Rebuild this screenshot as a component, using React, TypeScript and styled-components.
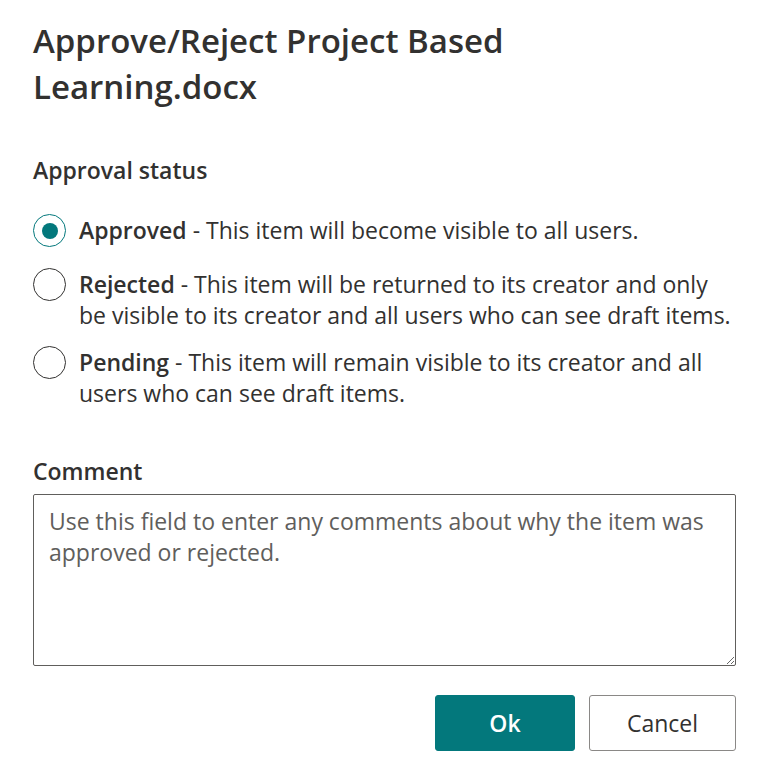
import { useState } from "react";
import styled, { createGlobalStyle } from "styled-components";

const GlobalStyle = createGlobalStyle`
  html, body {
    margin: 0;
    padding: 0;
    background: #ffffff;
  }
  body {
    font-family: "Open Sans", "Noto Sans", sans-serif;
    color: #323130;
  }
`;

const Dialog = styled.div`
  width: 761px;
  box-sizing: border-box;
  padding: 18px 25px 30px 33px;
  display: flex;
  flex-direction: column;
`;

const Title = styled.h1`
  margin: 0;
  font-size: 33px;
  line-height: 46px;
  font-weight: 600;
  color: #323130;
  max-width: 520px;
`;

const FieldLabel = styled.div<{ $top: number }>`
  margin-top: ${(p) => p.$top}px;
  font-size: 23px;
  line-height: 31px;
  font-weight: 600;
  color: #323130;
`;

const RadioGroup = styled.div`
  display: flex;
  flex-direction: column;
  gap: 16px;
  margin-top: 29px;
`;

const RadioRow = styled.label`
  display: flex;
  align-items: flex-start;
  gap: 13px;
  min-height: 38px;
  cursor: pointer;
`;

const Circle = styled.span<{ $checked: boolean }>`
  flex: none;
  width: 33px;
  height: 33px;
  box-sizing: border-box;
  border-radius: 50%;
  border: 1.5px solid ${(p) => (p.$checked ? "#03787c" : "#323130")};
  display: flex;
  align-items: center;
  justify-content: center;
  margin-top: -1px;

  &::after {
    content: "";
    width: 16px;
    height: 16px;
    border-radius: 50%;
    background: #03787c;
    display: ${(p) => (p.$checked ? "block" : "none")};
  }
`;

const RadioText = styled.span`
  font-size: 23px;
  line-height: 31px;
  color: #323130;
  max-width: 657px;
`;

const OptionTitle = styled.strong`
  font-weight: 600;
`;

const Comment = styled.textarea`
  margin-top: 7px;
  width: 100%;
  height: 172px;
  box-sizing: border-box;
  padding: 11px 15px;
  border: 1px solid #605e5c;
  border-radius: 2px;
  font-family: "Open Sans", "Noto Sans", sans-serif;
  font-size: 23px;
  line-height: 31px;
  color: #323130;
  resize: vertical;
  outline: none;

  &::placeholder {
    color: #605e5c;
  }
`;

const Footer = styled.div`
  display: flex;
  justify-content: flex-end;
  gap: 14px;
  margin-top: 29px;
`;

const Button = styled.button<{ $primary?: boolean }>`
  height: 56px;
  min-width: ${(p) => (p.$primary ? 140 : 147)}px;
  box-sizing: border-box;
  border-radius: 3px;
  border: 1px solid ${(p) => (p.$primary ? "#03787c" : "#8a8886")};
  background: ${(p) => (p.$primary ? "#03787c" : "#ffffff")};
  color: ${(p) => (p.$primary ? "#ffffff" : "#323130")};
  font-family: "Open Sans", "Noto Sans", sans-serif;
  font-size: 23px;
  font-weight: ${(p) => (p.$primary ? 600 : 500)};
  cursor: pointer;
`;

const options = [
  {
    key: "approved",
    title: "Approved",
    text: "This item will become visible to all users.",
  },
  {
    key: "rejected",
    title: "Rejected",
    text: "This item will be returned to its creator and only be visible to its creator and all users who can see draft items.",
  },
  {
    key: "pending",
    title: "Pending",
    text: "This item will remain visible to its creator and all users who can see draft items.",
  },
];

export default function App() {
  const [status, setStatus] = useState("approved");

  return (
    <>
      <GlobalStyle />
      <Dialog>
        <Title>Approve/Reject Project Based Learning.docx</Title>
        <FieldLabel $top={45}>Approval status</FieldLabel>
        <RadioGroup>
          {options.map((o) => (
            <RadioRow key={o.key} onClick={() => setStatus(o.key)}>
              <Circle $checked={status === o.key} />
              <RadioText>
                <OptionTitle>{o.title}</OptionTitle> - {o.text}
              </RadioText>
            </RadioRow>
          ))}
        </RadioGroup>
        <FieldLabel $top={47}>Comment</FieldLabel>
        <Comment placeholder="Use this field to enter any comments about why the item was approved or rejected." />
        <Footer>
          <Button $primary>Ok</Button>
          <Button>Cancel</Button>
        </Footer>
      </Dialog>
    </>
  );
}
